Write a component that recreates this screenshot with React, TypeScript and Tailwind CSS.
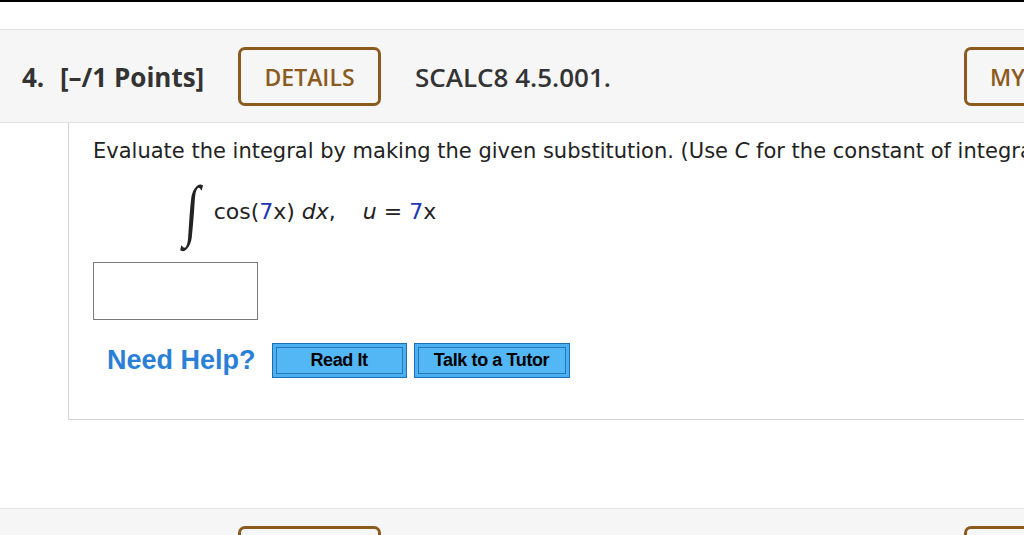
import React from "react";

const headFont = { fontFamily: '"Open Sans", "Liberation Sans", sans-serif' };
const bodyFont = { fontFamily: '"DejaVu Sans", Verdana, sans-serif' };
const helpFont = { fontFamily: '"Liberation Sans", Arial, sans-serif' };

function OutlineButton({ label, className = "" }: { label?: string; className?: string }) {
  return (
    <div
      className={`flex h-[59px] shrink-0 items-center justify-center rounded-[7px] border-[3px] border-[#8b5a1e] pt-[2px] text-[23px] font-semibold text-[#8b5a1e] ${className}`}
    >
      {label}
    </div>
  );
}

function HelpButton({ label, width }: { label: string; width: string }) {
  return (
    <button className={`${width} h-[35px] shrink-0 border border-[#1f6db5] bg-[#4bb0f2] p-[3px]`}>
      <span
        className="flex h-full w-full items-center justify-center border border-[#2a77b8] bg-[#53b6f5] text-[18px] font-bold tracking-[-0.4px] text-black"
        style={helpFont}
      >
        {label}
      </span>
    </button>
  );
}

function QuestionHeader({ number, points, code }: { number: string; points: string; code: string }) {
  return (
    <div
      className="flex h-[94px] items-center whitespace-nowrap border-y border-[#e2e2e2] bg-[#f6f6f6] pt-[2px] text-[#333]"
      style={headFont}
    >
      <span className="ml-[22px] w-[38px] shrink-0 text-[26px] font-bold">{number}</span>
      <span className="w-[178px] shrink-0 text-[26px] font-bold">{points}</span>
      <OutlineButton label="DETAILS" className="-mt-[2px] w-[143px]" />
      <span className="ml-[34px] w-[549px] shrink-0 text-[26px] font-semibold">{code}</span>
      <OutlineButton label="MY NOTES" className="-mt-[2px] w-[150px] justify-start pl-[23px]" />
    </div>
  );
}

export default function App() {
  return (
    <div className="h-[535px] w-[1024px] overflow-hidden bg-white">
      <div className="h-[2px] bg-black" />
      <div className="h-[27px]" />

      <QuestionHeader number="4." points="[–/1 Points]" code="SCALC8 4.5.001." />

      {/* question body */}
      <div className="ml-[68px] h-[297px] border-b border-l border-[#d4d4d4] pl-[24px] pt-[15px] text-[#222]" style={bodyFont}>
        <p className="whitespace-nowrap text-[21px] leading-[26px]">
          Evaluate the integral by making the given substitution. (Use <i>C</i> for the constant of integration.)
        </p>

        <div className="ml-[90px] mt-[15px] flex h-[64px] items-center whitespace-nowrap text-[22px]">
          <span
            className="mr-[12px] -mt-[2px] text-[68px] leading-none"
            style={{ fontFamily: '"Liberation Serif", serif', transform: "scaleX(0.7) skewX(-6deg)" }}
          >
            ∫
          </span>
          <span>
            cos(<span className="text-[#2236b4]">7</span>x) <i>dx</i>,
          </span>
          <span className="ml-[27px]">
            <i>u</i> = <span className="text-[#2236b4]">7</span>x
          </span>
        </div>

        <div className="mt-[19px] h-[58px] w-[165px] border-[1.5px] border-[#7a7a7a] bg-white" />

        <div className="ml-[14px] mt-[23px] flex items-center">
          <span className="mr-[16px] shrink-0 text-[27px] font-bold leading-none text-[#2a80d6]" style={helpFont}>
            Need Help?
          </span>
          <HelpButton label="Read It" width="w-[135px]" />
          <div className="w-[7px] shrink-0" />
          <HelpButton label="Talk to a Tutor" width="w-[156px]" />
        </div>
      </div>

      <div className="h-[88px]" />

      {/* next question header, only its top edge is in view */}
      <div className="flex h-[94px] items-start border-t border-[#e2e2e2] bg-[#f6f6f6] pt-[17px]">
        <div className="ml-[238px] h-[59px] w-[143px] shrink-0 rounded-[7px] border-[3px] border-[#8b5a1e]" />
        <div className="ml-[583px] h-[59px] w-[150px] shrink-0 rounded-[7px] border-[3px] border-[#8b5a1e]" />
      </div>
    </div>
  );
}
